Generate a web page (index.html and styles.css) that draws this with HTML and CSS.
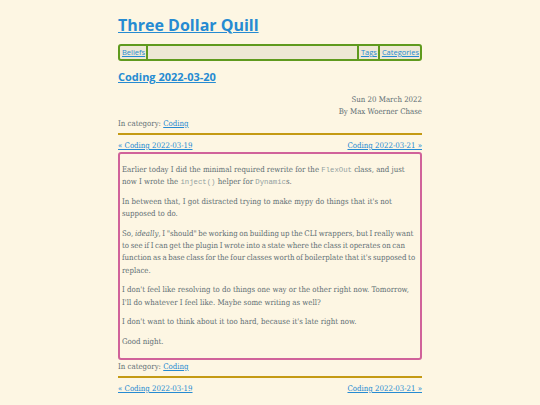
FILE: index.html
```html
<!DOCTYPE html>
<html>
<head>
<meta charset="utf-8">
<link rel="stylesheet" href="styles.css">
</head>
<body>
<div class="page">
  <header class="site-header">
    <h1 class="site-title"><a href="#">Three Dollar Quill</a></h1>
    <nav class="menu">
      <a class="menu-item" href="#">Beliefs</a>
      <span class="menu-spacer"></span>
      <a class="menu-item" href="#">Tags</a>
      <a class="menu-item" href="#">Categories</a>
    </nav>
  </header>
  <main>
    <h2 class="post-title"><a href="#">Coding 2022-03-20</a></h2>
    <div class="meta">
      <div>Sun 20 March 2022</div>
      <div>By Max Woerner Chase</div>
    </div>
    <div class="category">In category: <a href="#">Coding</a></div>
    <div class="rule"></div>
    <div class="pager">
      <a href="#">« Coding 2022-03-19</a>
      <a href="#">Coding 2022-03-21 »</a>
    </div>
    <article class="post">
      <p>Earlier today I did the minimal required rewrite for the <code>FlexOut</code> class, and just now I wrote the <code>inject()</code> helper for <code>Dynamic</code>s.</p>
      <p>In between that, I got distracted trying to make mypy do things that it's not supposed to do.</p>
      <p class="tight">So, <em>ideally</em>, I "should" be working on building up the CLI wrappers, but I really want to see if I can get the plugin I wrote into a state where the class it operates on can function as a base class for the four classes worth of boilerplate that it's supposed to replace.</p>
      <p>I don't feel like resolving to do things one way or the other right now. Tomorrow, I'll do whatever I feel like. Maybe some writing as well?</p>
      <p>I don't want to think about it too hard, because it's late right now.</p>
      <p>Good night.</p>
    </article>
    <div class="category after">In category: <a href="#">Coding</a></div>
    <div class="rule"></div>
    <div class="pager">
      <a href="#">« Coding 2022-03-19</a>
      <a href="#">Coding 2022-03-21 »</a>
    </div>
  </main>
  <footer class="footer">Powered by Pelican and Python</footer>
</div>
</body>
</html>
```
FILE: styles.css
```css
html, body {
  margin: 0;
  padding: 0;
  background: #fdf6e3;
}
body {
  font-family: "DejaVu Serif Condensed", "DejaVu Serif", serif;
  color: #5f6f74;
  font-size: 7.8px;
}
a {
  color: #268bd2;
  text-decoration: underline;
}
.page {
  width: 304px;
  margin: 0 auto;
  padding-top: 14px;
}
.site-title {
  margin: 0;
  font-family: "Open Sans", sans-serif;
  font-weight: 700;
  font-size: 16px;
  line-height: 22px;
}
.menu {
  margin-top: 8px;
  display: flex;
  align-items: stretch;
  background: #eee8d5;
  border: 2px solid #5f9a1e;
  border-radius: 3px;
  height: 13px;
  font-family: "Open Sans", sans-serif;
  font-size: 7.5px;
  line-height: 13px;
}
.menu-item {
  padding: 0 1px 0 2px;
  border-right: 2px solid #5f9a1e;
}
.menu-item:last-child {
  border-right: none;
}
.menu-spacer {
  flex: 1;
  border-right: 2px solid #5f9a1e;
}
.post-title {
  margin: 8px 0 0;
  font-family: "Open Sans", sans-serif;
  font-weight: 700;
  font-size: 11px;
  line-height: 15px;
}
.meta {
  margin-top: 10px;
  text-align: right;
  line-height: 12px;
}
.category {
  line-height: 11px;
}
.category.after {
  margin-top: 1px;
}
.rule {
  margin-top: 4px;
  height: 2px;
  background: #c49a14;
}
.pager {
  margin-top: 5px;
  display: flex;
  justify-content: space-between;
  line-height: 11px;
}
.post {
  margin-top: 1px;
  border: 2px solid #d0629a;
  border-radius: 3px;
  padding: 2px 1px 2px 2px;
}
.post p {
  margin: 7.5px 0;
  line-height: 12.3px;
}
.post p.tight {
  word-spacing: -0.6px;
}
code {
  font-family: "Liberation Mono", monospace;
  font-size: 7.3px;
  line-height: 1;
  color: #93a1a1;
}
.footer {
  margin-top: 10px;
  padding-left: 20px;
}
```
